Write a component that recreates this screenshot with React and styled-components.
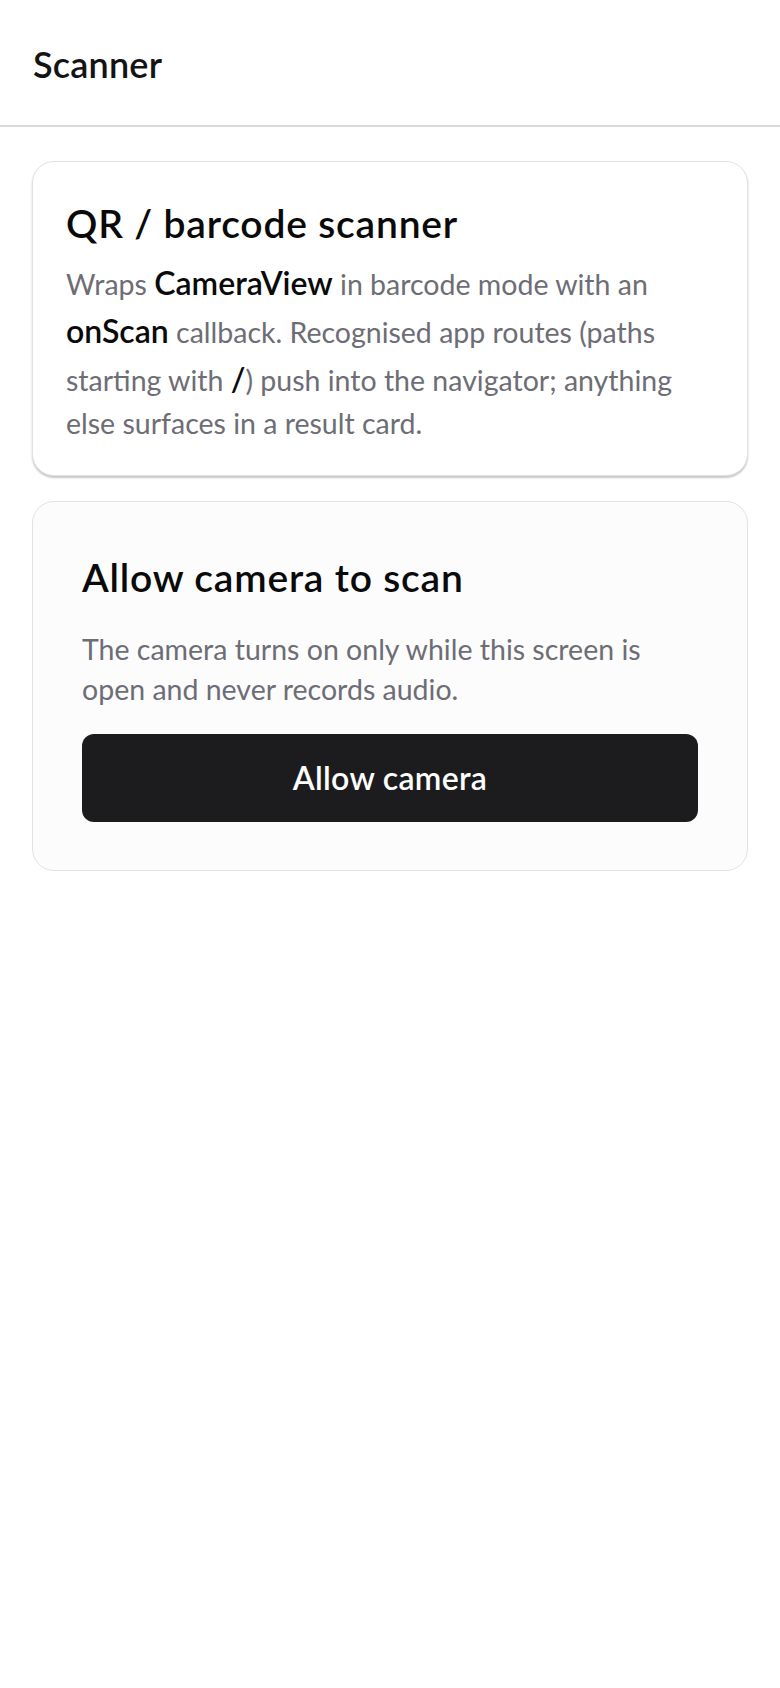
import React from 'react';
import styled, { createGlobalStyle } from 'styled-components';

const GlobalStyle = createGlobalStyle`
  html, body {
    margin: 0;
    padding: 0;
    background: #ffffff;
  }
  body {
    font-family: Lato, "Noto Sans", "Liberation Sans", sans-serif;
    color: #0b0b0c;
    -webkit-font-smoothing: antialiased;
  }
  * {
    box-sizing: border-box;
  }
`;

const Screen = styled.div`
  min-height: 1688px;
  background: #ffffff;
`;

const Header = styled.header`
  display: flex;
  align-items: center;
  height: 127px;
  padding: 4px 33px 0;
  border-bottom: 2px solid #dadada;
`;

const HeaderTitle = styled.h1`
  margin: 0;
  font-size: 36px;
  line-height: 1.2;
  font-weight: 600;
  letter-spacing: 0.2px;
  color: #141414;
`;

const Content = styled.main`
  display: flex;
  flex-direction: column;
  gap: 25px;
  padding: 34px 32px;
`;

// muted = the soft grey permission panel, raised = the intro card with a drop shadow
const Card = styled.section`
  border: 1.5px solid #e2e2e2;
  border-radius: 22px;
  background: ${p => (p.muted ? '#fcfcfc' : '#ffffff')};
  padding: ${p => (p.muted ? '52px 49px 48px' : '38px 33px 32px')};
  box-shadow: ${p => (p.raised ? '0 2px 2px rgba(0, 0, 0, 0.22)' : 'none')};
`;

const CardTitle = styled.h2`
  margin: 0 0 ${p => (p.spaced ? '28px' : '12px')};
  font-size: 39px;
  line-height: 1.2;
  font-weight: 600;
  letter-spacing: 0.8px;
  color: #0a0a0a;
`;

const Body = styled.p`
  margin: 0;
  font-size: 28.5px;
  line-height: 40px;
  color: #6d6d75;
`;

const Code = styled.span`
  display: inline-block;
  padding: 4px 0;
  font-size: 32px;
  line-height: 40px;
  font-weight: 600;
  color: #0a0a0a;
`;

const PrimaryButton = styled.button`
  display: flex;
  align-items: center;
  justify-content: center;
  width: 100%;
  height: 88px;
  margin-top: 25px;
  border: none;
  border-radius: 12px;
  background: #1c1c1e;
  color: #ffffff;
  font-family: inherit;
  font-size: 32px;
  font-weight: 600;
  letter-spacing: 0.3px;
  cursor: pointer;
`;

export default function App() {
  return (
    <Screen>
      <GlobalStyle />
      <Header>
        <HeaderTitle>Scanner</HeaderTitle>
      </Header>
      <Content>
        <Card raised>
          <CardTitle>QR / barcode scanner</CardTitle>
          <Body>
            Wraps <Code>CameraView</Code> in barcode mode with an <Code>onScan</Code> callback.
            Recognised app routes (paths starting with <Code>/</Code>) push into the navigator;
            anything else surfaces in a result card.
          </Body>
        </Card>
        <Card muted>
          <CardTitle spaced>Allow camera to scan</CardTitle>
          <Body>
            The camera turns on only while this screen is open and never records audio.
          </Body>
          <PrimaryButton>Allow camera</PrimaryButton>
        </Card>
      </Content>
    </Screen>
  );
}
